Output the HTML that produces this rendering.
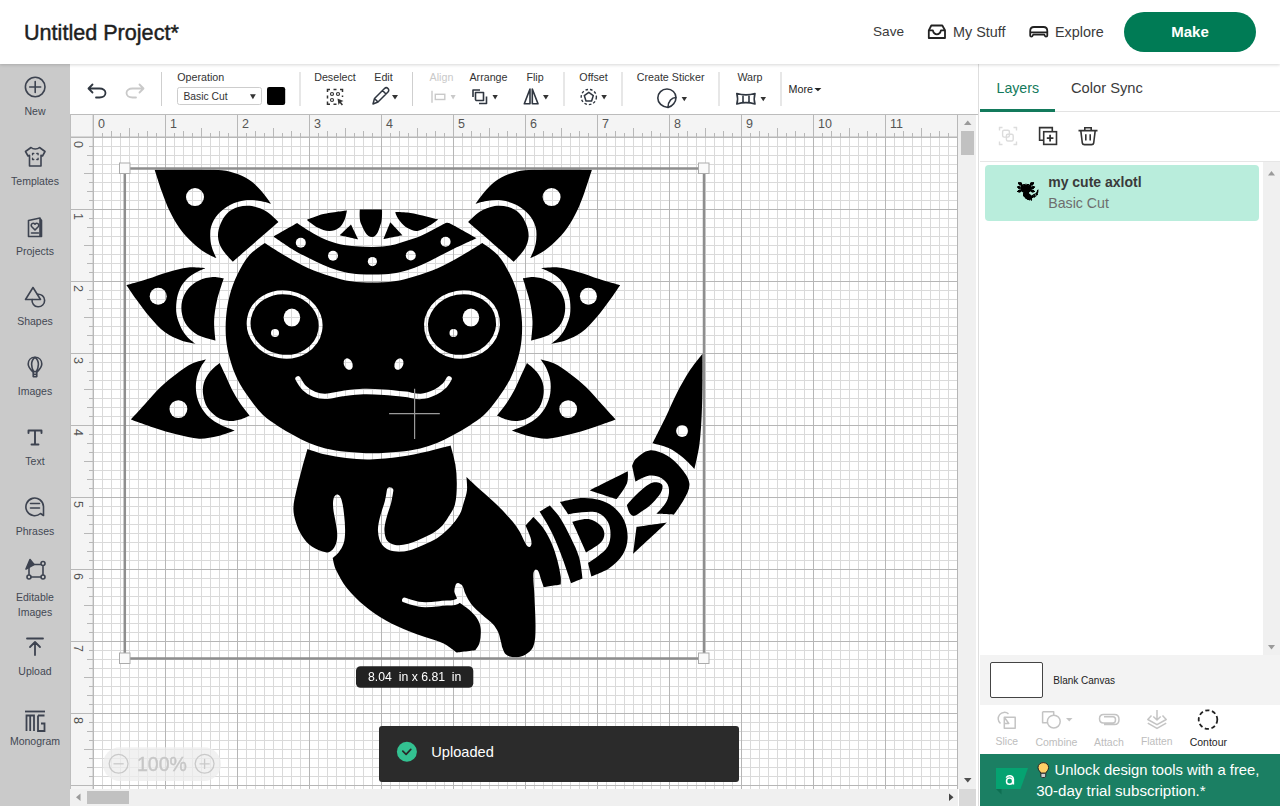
<!DOCTYPE html>
<html><head><meta charset="utf-8">
<style>
*{margin:0;padding:0;box-sizing:border-box}
html,body{width:1280px;height:806px;overflow:hidden;background:#fff;font-family:"Liberation Sans",sans-serif;color:#333}
.abs{position:absolute}
.t{position:absolute;white-space:nowrap;line-height:1}
#hdr{left:0;top:0;width:1280px;height:64px;background:#fff;z-index:5;box-shadow:0 1px 3px rgba(0,0,0,.16)}
#side{left:0;top:64px;width:70px;height:742px;background:#cacaca}
.sl{position:absolute;left:0;width:70px;text-align:center;font-size:10.5px;color:#434853;line-height:1;white-space:nowrap}
.tl{position:absolute;font-size:10.7px;color:#333;line-height:1;white-space:nowrap;transform:translateX(-50%)}
</style></head><body>
<svg class="abs" style="left:70px;top:114px" width="908" height="692" viewBox="70 114 908 692"><rect x="70" y="114" width="908" height="692" fill="#fff"/><path d="M102.5,137V789M111.5,137V789M120.5,137V789M129.5,137V789M138.5,137V789M147.5,137V789M156.5,137V789M174.5,137V789M183.5,137V789M192.5,137V789M201.5,137V789M210.5,137V789M219.5,137V789M228.5,137V789M246.5,137V789M255.5,137V789M264.5,137V789M273.5,137V789M282.5,137V789M291.5,137V789M300.5,137V789M318.5,137V789M327.5,137V789M336.5,137V789M345.5,137V789M354.5,137V789M363.5,137V789M372.5,137V789M390.5,137V789M399.5,137V789M408.5,137V789M417.5,137V789M426.5,137V789M435.5,137V789M444.5,137V789M462.5,137V789M471.5,137V789M480.5,137V789M489.5,137V789M498.5,137V789M507.5,137V789M516.5,137V789M534.5,137V789M543.5,137V789M552.5,137V789M561.5,137V789M570.5,137V789M579.5,137V789M588.5,137V789M606.5,137V789M615.5,137V789M624.5,137V789M633.5,137V789M642.5,137V789M651.5,137V789M660.5,137V789M678.5,137V789M687.5,137V789M696.5,137V789M705.5,137V789M714.5,137V789M723.5,137V789M732.5,137V789M750.5,137V789M759.5,137V789M768.5,137V789M777.5,137V789M786.5,137V789M795.5,137V789M804.5,137V789M822.5,137V789M831.5,137V789M840.5,137V789M849.5,137V789M858.5,137V789M867.5,137V789M876.5,137V789M894.5,137V789M903.5,137V789M912.5,137V789M921.5,137V789M930.5,137V789M939.5,137V789M948.5,137V789M93,146.5H958M93,155.5H958M93,164.5H958M93,173.5H958M93,182.5H958M93,191.5H958M93,200.5H958M93,218.5H958M93,227.5H958M93,236.5H958M93,245.5H958M93,254.5H958M93,263.5H958M93,272.5H958M93,290.5H958M93,299.5H958M93,308.5H958M93,317.5H958M93,326.5H958M93,335.5H958M93,344.5H958M93,362.5H958M93,371.5H958M93,380.5H958M93,389.5H958M93,398.5H958M93,407.5H958M93,416.5H958M93,434.5H958M93,443.5H958M93,452.5H958M93,461.5H958M93,470.5H958M93,479.5H958M93,488.5H958M93,506.5H958M93,515.5H958M93,524.5H958M93,533.5H958M93,542.5H958M93,551.5H958M93,560.5H958M93,578.5H958M93,587.5H958M93,596.5H958M93,605.5H958M93,614.5H958M93,623.5H958M93,632.5H958M93,650.5H958M93,659.5H958M93,668.5H958M93,677.5H958M93,686.5H958M93,695.5H958M93,704.5H958M93,722.5H958M93,731.5H958M93,740.5H958M93,749.5H958M93,758.5H958M93,767.5H958M93,776.5H958" stroke="#dadada" stroke-width="1"/><path d="M93.5,137V789M165.5,137V789M237.5,137V789M309.5,137V789M381.5,137V789M453.5,137V789M525.5,137V789M597.5,137V789M669.5,137V789M741.5,137V789M813.5,137V789M885.5,137V789M957.5,137V789M93,137.5H958M93,209.5H958M93,281.5H958M93,353.5H958M93,425.5H958M93,497.5H958M93,569.5H958M93,641.5H958M93,713.5H958M93,785.5H958" stroke="#b6b6b6" stroke-width="1"/><rect x="70" y="114" width="888" height="23" fill="#f4f4f4"/><rect x="70" y="137" width="23" height="652" fill="#f4f4f4"/><path d="M93.5,114V137M102.5,133V137M111.5,131V137M120.5,133V137M129.5,128V137M138.5,133V137M147.5,131V137M156.5,133V137M165.5,114V137M174.5,133V137M183.5,131V137M192.5,133V137M201.5,128V137M210.5,133V137M219.5,131V137M228.5,133V137M237.5,114V137M246.5,133V137M255.5,131V137M264.5,133V137M273.5,128V137M282.5,133V137M291.5,131V137M300.5,133V137M309.5,114V137M318.5,133V137M327.5,131V137M336.5,133V137M345.5,128V137M354.5,133V137M363.5,131V137M372.5,133V137M381.5,114V137M390.5,133V137M399.5,131V137M408.5,133V137M417.5,128V137M426.5,133V137M435.5,131V137M444.5,133V137M453.5,114V137M462.5,133V137M471.5,131V137M480.5,133V137M489.5,128V137M498.5,133V137M507.5,131V137M516.5,133V137M525.5,114V137M534.5,133V137M543.5,131V137M552.5,133V137M561.5,128V137M570.5,133V137M579.5,131V137M588.5,133V137M597.5,114V137M606.5,133V137M615.5,131V137M624.5,133V137M633.5,128V137M642.5,133V137M651.5,131V137M660.5,133V137M669.5,114V137M678.5,133V137M687.5,131V137M696.5,133V137M705.5,128V137M714.5,133V137M723.5,131V137M732.5,133V137M741.5,114V137M750.5,133V137M759.5,131V137M768.5,133V137M777.5,128V137M786.5,133V137M795.5,131V137M804.5,133V137M813.5,114V137M822.5,133V137M831.5,131V137M840.5,133V137M849.5,128V137M858.5,133V137M867.5,131V137M876.5,133V137M885.5,114V137M894.5,133V137M903.5,131V137M912.5,133V137M921.5,128V137M930.5,133V137M939.5,131V137M948.5,133V137M957.5,114V137M70,137.5H93M89,146.5H93M87,155.5H93M89,164.5H93M84,173.5H93M89,182.5H93M87,191.5H93M89,200.5H93M70,209.5H93M89,218.5H93M87,227.5H93M89,236.5H93M84,245.5H93M89,254.5H93M87,263.5H93M89,272.5H93M70,281.5H93M89,290.5H93M87,299.5H93M89,308.5H93M84,317.5H93M89,326.5H93M87,335.5H93M89,344.5H93M70,353.5H93M89,362.5H93M87,371.5H93M89,380.5H93M84,389.5H93M89,398.5H93M87,407.5H93M89,416.5H93M70,425.5H93M89,434.5H93M87,443.5H93M89,452.5H93M84,461.5H93M89,470.5H93M87,479.5H93M89,488.5H93M70,497.5H93M89,506.5H93M87,515.5H93M89,524.5H93M84,533.5H93M89,542.5H93M87,551.5H93M89,560.5H93M70,569.5H93M89,578.5H93M87,587.5H93M89,596.5H93M84,605.5H93M89,614.5H93M87,623.5H93M89,632.5H93M70,641.5H93M89,650.5H93M87,659.5H93M89,668.5H93M84,677.5H93M89,686.5H93M87,695.5H93M89,704.5H93M70,713.5H93M89,722.5H93M87,731.5H93M89,740.5H93M84,749.5H93M89,758.5H93M87,767.5H93M89,776.5H93M70,785.5H93" stroke="#b8b8b8" stroke-width="1"/><rect x="70" y="136.5" width="888" height="1.2" fill="#b8b8b8"/><rect x="92.6" y="114" width="1.2" height="675" fill="#b8b8b8"/><rect x="70" y="113" width="908" height="2" fill="#bcbcbc"/><rect x="70" y="114" width="1" height="692" fill="#bdbdbd"/><g font-family="Liberation Sans"><text x="98" y="128" font-size="12.5" fill="#555">0</text><text x="170" y="128" font-size="12.5" fill="#555">1</text><text x="242" y="128" font-size="12.5" fill="#555">2</text><text x="314" y="128" font-size="12.5" fill="#555">3</text><text x="386" y="128" font-size="12.5" fill="#555">4</text><text x="458" y="128" font-size="12.5" fill="#555">5</text><text x="530" y="128" font-size="12.5" fill="#555">6</text><text x="602" y="128" font-size="12.5" fill="#555">7</text><text x="674" y="128" font-size="12.5" fill="#555">8</text><text x="746" y="128" font-size="12.5" fill="#555">9</text><text x="818" y="128" font-size="12.5" fill="#555">10</text><text x="890" y="128" font-size="12.5" fill="#555">11</text><text transform="translate(74,141) rotate(90)" x="0" y="0" font-size="12.5" fill="#555" >0</text><text transform="translate(74,213) rotate(90)" x="0" y="0" font-size="12.5" fill="#555" >1</text><text transform="translate(74,285) rotate(90)" x="0" y="0" font-size="12.5" fill="#555" >2</text><text transform="translate(74,357) rotate(90)" x="0" y="0" font-size="12.5" fill="#555" >3</text><text transform="translate(74,429) rotate(90)" x="0" y="0" font-size="12.5" fill="#555" >4</text><text transform="translate(74,501) rotate(90)" x="0" y="0" font-size="12.5" fill="#555" >5</text><text transform="translate(74,573) rotate(90)" x="0" y="0" font-size="12.5" fill="#555" >6</text><text transform="translate(74,645) rotate(90)" x="0" y="0" font-size="12.5" fill="#555" >7</text><text transform="translate(74,717) rotate(90)" x="0" y="0" font-size="12.5" fill="#555" >8</text></g><rect x="958" y="115" width="18" height="674" fill="#f0f0f0"/><path d="M964,125H971.5L967.75,120.5Z" fill="#9a9a9a"/><rect x="961" y="131" width="13" height="24" fill="#c1c1c1"/><path d="M964,778H971.5L967.75,782.5Z" fill="#505050"/><rect x="70" y="789" width="888" height="17" fill="#f0f0f0"/><path d="M80.5,793.5V801L76,797.25Z" fill="#9a9a9a"/><rect x="87" y="791" width="42" height="13" fill="#c1c1c1"/><path d="M949,793.5V801L953.5,797.25Z" fill="#454545"/><rect x="959" y="789" width="17" height="17" fill="#d9d9d9"/></svg>
<svg class="abs" style="left:0;top:0" width="1280" height="806" viewBox="0 0 1280 806"><defs><mask id="axm" maskUnits="userSpaceOnUse" x="0" y="0" width="1280" height="806"><rect x="0" y="0" width="1280" height="806" fill="#000"/><g fill="#fff"><path d="M154.7,169.8 C154.7,169.8 199.5,169.0 221.9,170.2 C227.5,170.5 233.0,172.3 238.2,174.3 C243.1,176.2 247.7,178.7 251.9,181.8 C256.0,184.9 259.4,188.8 262.8,192.7 C265.8,196.1 271.0,203.7 271.0,203.7 C271.0,203.7 263.8,201.4 260.1,200.9 C255.1,200.2 250.1,199.6 245.1,200.3 C239.9,201.0 234.7,202.6 230.0,205.0 C225.4,207.4 221.2,210.7 217.8,214.6 C214.7,218.1 212.4,222.4 211.0,226.9 C209.8,230.8 210.1,235.0 210.3,239.1 C210.5,242.4 211.3,245.6 212.3,248.7 C213.3,252.0 216.4,258.2 216.4,258.2 C216.4,258.2 208.9,255.0 205.5,252.8 C200.6,249.6 196.0,245.9 191.8,241.9 C187.4,237.7 183.2,233.2 179.6,228.2 C175.9,223.1 172.8,217.5 170.0,211.8 C166.8,205.2 164.3,198.3 161.8,191.4 C159.2,184.3 154.7,169.8 154.7,169.8Z"/><path d="M591.9,169.8 C591.9,169.8 547.1,169.0 524.7,170.2 C519.1,170.5 513.6,172.3 508.4,174.3 C503.5,176.2 498.9,178.7 494.7,181.8 C490.6,184.9 487.2,188.8 483.8,192.7 C480.8,196.1 475.6,203.7 475.6,203.7 C475.6,203.7 482.8,201.4 486.5,200.9 C491.5,200.2 496.5,199.6 501.5,200.3 C506.7,201.0 511.9,202.6 516.6,205.0 C521.2,207.4 525.4,210.7 528.8,214.6 C531.9,218.1 534.2,222.4 535.6,226.9 C536.8,230.8 536.5,235.0 536.3,239.1 C536.1,242.4 535.3,245.6 534.3,248.7 C533.3,252.0 530.2,258.2 530.2,258.2 C530.2,258.2 537.7,255.0 541.1,252.8 C546.0,249.6 550.6,245.9 554.8,241.9 C559.2,237.7 563.4,233.2 567.0,228.2 C570.7,223.1 573.8,217.5 576.6,211.8 C579.8,205.2 582.3,198.3 584.8,191.4 C587.4,184.3 591.9,169.8 591.9,169.8Z"/><path d="M278.5,222.1 C278.5,222.1 271.3,214.5 266.9,211.8 C262.3,209.0 257.2,207.0 251.9,206.1 C247.4,205.4 242.6,205.8 238.2,207.1 C234.2,208.3 230.3,210.3 227.3,213.2 C224.2,216.2 222.1,220.1 220.5,224.1 C218.9,228.0 217.8,232.2 218.0,236.4 C218.2,240.7 219.7,245.0 221.9,248.7 C224.8,253.6 232.8,261.7 232.8,261.7 C232.8,261.7 278.5,222.1 278.5,222.1Z"/><path d="M468.1,222.1 C468.1,222.1 475.3,214.5 479.7,211.8 C484.3,209.0 489.4,207.0 494.7,206.1 C499.2,205.4 504.0,205.8 508.4,207.1 C512.4,208.3 516.3,210.3 519.3,213.2 C522.4,216.2 524.5,220.1 526.1,224.1 C527.7,228.0 528.8,232.2 528.6,236.4 C528.4,240.7 526.9,245.0 524.7,248.7 C521.8,253.6 513.8,261.7 513.8,261.7 C513.8,261.7 468.1,222.1 468.1,222.1Z"/><path d="M126.5,285.2 C126.5,285.2 140.4,281.3 147.3,279.1 C154.2,277.0 160.9,274.3 167.8,272.3 C174.5,270.4 181.3,268.3 188.2,267.5 C193.9,266.9 205.3,268.2 205.3,268.2 C205.3,268.2 199.2,270.6 196.4,272.3 C193.0,274.3 189.7,276.3 186.9,279.1 C184.1,281.9 181.7,285.1 180.0,288.7 C178.2,292.5 177.1,296.7 176.6,300.9 C176.0,305.4 175.9,310.1 176.6,314.6 C177.3,318.9 178.9,323.0 180.7,326.9 C182.3,330.3 184.4,333.6 186.9,336.4 C189.4,339.3 195.7,343.9 195.7,343.9 C195.7,343.9 186.0,342.2 181.4,340.5 C175.7,338.3 169.9,335.9 165.0,332.3 C159.3,328.1 154.7,322.6 150.0,317.3 C145.1,311.7 140.8,305.6 136.4,299.6 C133.0,294.9 126.5,285.2 126.5,285.2Z"/><path d="M620.1,285.2 C620.1,285.2 606.2,281.3 599.3,279.1 C592.4,277.0 585.7,274.3 578.8,272.3 C572.1,270.4 565.3,268.3 558.4,267.5 C552.7,266.9 541.3,268.2 541.3,268.2 C541.3,268.2 547.4,270.6 550.2,272.3 C553.6,274.3 556.9,276.3 559.7,279.1 C562.5,281.9 564.9,285.1 566.6,288.7 C568.4,292.5 569.5,296.7 570.0,300.9 C570.6,305.4 570.7,310.1 570.0,314.6 C569.3,318.9 567.7,323.0 565.9,326.9 C564.3,330.3 562.2,333.6 559.7,336.4 C557.2,339.3 550.9,343.9 550.9,343.9 C550.9,343.9 560.6,342.2 565.2,340.5 C570.9,338.3 576.7,335.9 581.6,332.3 C587.3,328.1 591.9,322.6 596.6,317.3 C601.5,311.7 605.8,305.6 610.2,299.6 C613.6,294.9 620.1,285.2 620.1,285.2Z"/><path d="M223.7,278.4 C223.7,278.4 216.4,276.8 212.8,277.1 C208.1,277.5 203.4,278.5 199.1,280.5 C195.0,282.4 191.1,285.2 188.2,288.7 C185.3,292.2 183.1,296.5 182.1,300.9 C181.1,305.3 181.2,310.1 182.1,314.6 C182.9,318.5 184.5,322.4 186.9,325.5 C189.8,329.3 193.5,332.8 197.8,335.0 C203.3,337.9 215.5,340.5 215.5,340.5 C215.5,340.5 213.9,327.8 214.1,321.4 C214.3,314.5 215.4,307.6 216.9,300.9 C218.6,293.3 223.7,278.4 223.7,278.4Z"/><path d="M522.9,278.4 C522.9,278.4 530.2,276.8 533.8,277.1 C538.5,277.5 543.2,278.5 547.5,280.5 C551.6,282.4 555.5,285.2 558.4,288.7 C561.3,292.2 563.5,296.5 564.5,300.9 C565.5,305.3 565.4,310.1 564.5,314.6 C563.7,318.5 562.1,322.4 559.7,325.5 C556.8,329.3 553.1,332.8 548.8,335.0 C543.3,337.9 531.1,340.5 531.1,340.5 C531.1,340.5 532.7,327.8 532.5,321.4 C532.3,314.5 531.2,307.6 529.7,300.9 C528.0,293.3 522.9,278.4 522.9,278.4Z"/><path d="M130.9,419.6 C130.9,419.6 140.0,409.6 144.6,404.6 C150.0,398.7 155.1,392.4 160.9,386.8 C166.0,381.9 171.6,377.4 177.3,373.2 C182.1,369.7 186.9,366.1 192.3,363.6 C196.6,361.6 206.0,359.6 206.0,359.6 C206.0,359.6 201.9,364.7 200.5,367.7 C198.7,371.6 197.1,375.7 196.4,380.0 C195.7,384.5 195.7,389.2 196.4,393.7 C197.1,397.9 198.5,402.1 200.5,405.9 C202.6,409.9 205.4,413.8 208.7,416.9 C212.3,420.2 216.7,422.7 221.0,425.0 C225.3,427.3 234.6,430.5 234.6,430.5 C234.6,430.5 223.8,434.7 218.2,436.0 C211.9,437.4 205.5,438.9 199.1,438.7 C191.7,438.4 184.5,436.3 177.3,434.6 C169.5,432.7 161.8,430.3 154.1,427.8 C146.3,425.3 130.9,419.6 130.9,419.6Z"/><path d="M615.7,419.6 C615.7,419.6 606.6,409.6 602.0,404.6 C596.6,398.7 591.5,392.4 585.7,386.8 C580.6,381.9 575.0,377.4 569.3,373.2 C564.5,369.7 559.7,366.1 554.3,363.6 C550.0,361.6 540.6,359.6 540.6,359.6 C540.6,359.6 544.7,364.7 546.1,367.7 C547.9,371.6 549.5,375.7 550.2,380.0 C550.9,384.5 550.9,389.2 550.2,393.7 C549.5,397.9 548.1,402.1 546.1,405.9 C544.0,409.9 541.2,413.8 537.9,416.9 C534.3,420.2 529.9,422.7 525.6,425.0 C521.3,427.3 512.0,430.5 512.0,430.5 C512.0,430.5 522.8,434.7 528.4,436.0 C534.7,437.4 541.1,438.9 547.5,438.7 C554.9,438.4 562.1,436.3 569.3,434.6 C577.1,432.7 584.8,430.3 592.5,427.8 C600.3,425.3 615.7,419.6 615.7,419.6Z"/><path d="M219.6,363.0 C219.6,363.0 212.7,368.4 210.0,371.8 C207.4,375.1 205.1,378.7 203.9,382.7 C202.7,386.6 202.6,390.9 203.2,395.0 C203.8,399.3 205.0,403.6 207.3,407.3 C209.7,411.1 213.1,414.5 216.9,416.9 C220.6,419.2 224.9,420.5 229.2,421.0 C232.8,421.4 236.6,420.6 240.1,419.6 C243.4,418.7 249.6,415.5 249.6,415.5 C249.6,415.5 243.0,407.5 240.1,403.2 C237.1,398.8 234.4,394.3 231.9,389.6 C229.4,384.7 227.4,379.6 225.1,374.6 C223.3,370.7 219.6,363.0 219.6,363.0Z"/><path d="M527.0,363.0 C527.0,363.0 533.9,368.4 536.6,371.8 C539.2,375.1 541.5,378.7 542.7,382.7 C543.9,386.6 544.0,390.9 543.4,395.0 C542.8,399.3 541.6,403.6 539.3,407.3 C536.9,411.1 533.5,414.5 529.7,416.9 C526.0,419.2 521.7,420.5 517.4,421.0 C513.8,421.4 510.0,420.6 506.5,419.6 C503.2,418.7 497.0,415.5 497.0,415.5 C497.0,415.5 503.6,407.5 506.5,403.2 C509.5,398.8 512.2,394.3 514.7,389.6 C517.2,384.7 519.2,379.6 521.5,374.6 C523.3,370.7 527.0,363.0 527.0,363.0Z"/><path d="M372.4,282.5 C365.3,282.5 358.1,282.4 351.0,281.3 C344.0,280.3 337.2,278.3 330.5,276.2 C323.0,273.9 315.5,271.4 308.4,268.2 C300.7,264.7 293.3,260.5 286.0,256.2 C278.8,252.1 264.8,242.9 264.8,242.9 C264.8,242.9 253.9,250.0 249.7,254.8 C244.6,260.7 240.8,267.7 237.3,274.7 C234.2,281.0 231.7,287.7 229.9,294.5 C228.0,301.8 226.7,309.3 226.1,316.8 C225.5,324.2 225.4,331.8 226.1,339.2 C226.7,345.9 228.1,352.5 229.9,359.0 C231.8,365.8 234.1,372.6 237.3,378.9 C240.8,385.9 245.2,392.4 249.7,398.7 C253.8,404.4 258.0,410.1 263.0,415.0 C267.4,419.3 272.7,422.5 277.8,425.9 C283.1,429.4 288.6,432.5 294.1,435.5 C299.0,438.2 303.9,440.9 309.1,443.0 C314.4,445.2 319.9,447.1 325.5,448.4 C332.2,450.0 339.1,451.1 346.0,451.8 C354.8,452.7 363.6,453.3 372.4,453.3 C381.4,453.3 390.4,452.7 399.3,451.8 C406.4,451.1 413.4,450.0 420.2,448.4 C425.9,447.1 431.5,445.2 437.0,443.0 C442.2,440.9 447.3,438.2 452.3,435.5 C457.9,432.5 463.5,429.4 468.9,425.9 C474.1,422.5 479.5,419.3 484.0,415.0 C489.1,410.1 493.4,404.4 497.6,398.7 C502.2,392.4 506.7,385.9 510.2,378.9 C513.4,372.6 515.8,365.8 517.8,359.0 C519.6,352.5 521.0,345.9 521.6,339.2 C522.3,331.8 522.3,324.2 521.6,316.8 C521.0,309.3 519.7,301.8 517.8,294.5 C515.9,287.7 513.4,281.0 510.2,274.7 C506.6,267.7 502.8,260.7 497.6,254.8 C493.3,249.9 482.2,242.9 482.2,242.9 C482.2,242.9 467.9,252.1 460.5,256.2 C453.1,260.5 445.5,264.7 437.7,268.2 C430.4,271.4 422.8,273.9 415.1,276.2 C408.3,278.3 401.3,280.3 394.2,281.3 C387.0,282.4 379.7,282.5 372.4,282.5Z"/><path d="M372.4,247.0 C366.9,246.9 361.5,246.8 356.0,246.3 C350.6,245.8 345.2,245.4 340.0,244.2 C334.8,243.0 329.6,241.4 324.7,239.3 C319.5,237.1 314.6,234.2 309.8,231.3 C305.4,228.7 297.1,222.9 297.1,222.9 C297.1,222.9 273.4,236.5 273.4,236.5 C273.4,236.5 286.6,245.8 293.5,249.9 C300.7,254.2 308.3,257.8 315.8,261.5 C320.4,263.8 325.1,266.0 330.0,267.8 C334.9,269.6 339.8,271.1 344.9,272.2 C349.8,273.3 354.8,273.8 359.8,274.2 C364.0,274.6 368.2,274.6 372.4,274.6 C376.6,274.6 380.7,274.6 384.9,274.2 C389.9,273.8 394.9,273.3 399.8,272.2 C404.9,271.1 409.8,269.6 414.7,267.8 C419.6,266.0 424.2,263.8 428.9,261.5 C436.5,257.8 443.7,253.6 451.3,249.9 C459.6,245.8 476.5,238.2 476.5,238.2 C476.5,238.2 460.3,228.9 452.0,224.5 C450.4,223.7 448.8,222.6 447.0,222.7 C445.1,222.8 443.6,224.2 441.9,225.0 C438.7,226.6 435.7,228.4 432.5,230.0 C428.4,232.1 424.3,234.4 420.0,236.2 C415.9,238.0 411.7,239.2 407.5,240.6 C403.4,241.9 399.2,243.4 395.0,244.4 C390.9,245.4 386.7,246.1 382.5,246.6 C379.2,247.0 375.8,247.0 372.4,247.0Z"/><path d="M307.0,219.9 C307.0,219.9 317.8,215.4 323.4,214.1 C331.1,212.3 346.9,210.5 346.9,210.5 C346.9,210.5 345.9,217.0 344.5,219.9 C343.1,222.9 341.4,226.1 338.7,228.1 C336.1,230.1 332.6,231.2 329.3,231.1 C325.2,231.0 321.2,229.3 317.6,227.5 C313.7,225.5 307.0,219.9 307.0,219.9Z"/><path d="M351.0,224.6 C351.0,224.6 339.8,235.2 339.8,235.2 C339.8,235.2 358.0,239.3 358.0,239.3 C358.0,239.3 351.0,224.6 351.0,224.6Z"/><path d="M359.8,209.4 C359.8,209.4 382.0,209.4 382.0,209.4 C382.0,209.4 382.5,219.0 380.9,223.4 C379.1,228.5 377.5,236.9 372.1,236.9 C366.3,236.9 363.3,228.7 360.9,223.4 C359.0,219.1 359.8,209.4 359.8,209.4Z"/><path d="M390.3,222.2 C390.3,222.2 383.4,239.1 383.4,239.1 C383.4,239.1 402.5,235.3 402.5,235.3 C402.5,235.3 390.3,222.2 390.3,222.2Z"/><path d="M395.3,211.9 C395.3,211.9 403.5,212.0 407.5,212.5 C411.7,213.0 415.9,214.1 420.0,215.0 C426.1,216.4 438.1,219.4 438.1,219.4 C438.1,219.4 432.5,223.9 429.4,225.6 C425.6,227.7 421.8,230.4 417.5,230.9 C414.1,231.3 410.5,229.8 407.5,228.1 C404.5,226.5 402.2,223.8 400.0,221.2 C398.4,219.4 397.3,217.2 396.2,215.0 C395.8,214.0 395.3,211.9 395.3,211.9Z"/><path d="M307.5,448.9 C307.5,448.9 319.4,453.2 325.5,454.6 C332.2,456.2 339.1,457.3 346.0,458.0 C354.0,458.9 362.0,459.6 370.0,459.4 C380.0,459.2 390.1,458.2 400.0,456.8 C409.2,455.5 418.3,453.4 427.3,451.4 C435.1,449.6 450.6,445.4 450.6,445.4 C450.6,445.4 454.3,457.8 455.3,464.1 C456.4,470.9 456.9,477.7 456.8,484.6 C456.7,491.4 456.6,498.4 454.8,505.0 C453.4,510.0 449.9,514.2 447.3,518.7 C445.8,521.3 443.2,523.5 442.5,526.5 C442.2,528.0 444.5,530.5 444.5,530.5 C444.5,530.5 448.5,528.5 450.0,526.9 C453.6,523.1 457.1,519.1 459.6,514.6 C461.8,510.7 462.7,506.1 464.0,501.8 C465.2,497.9 466.6,494.0 467.0,489.9 C467.4,485.6 466.4,477.0 466.4,477.0 C466.4,477.0 472.0,482.3 474.9,484.9 C478.2,487.9 481.5,490.8 484.8,493.8 C488.1,496.8 491.5,499.7 494.7,502.8 C498.1,506.0 501.5,509.3 504.7,512.7 C507.4,515.6 510.1,518.5 512.6,521.6 C515.1,524.8 517.5,528.0 519.6,531.5 C521.5,534.7 522.7,538.2 524.5,541.5 C525.4,543.1 526.2,544.9 527.5,546.2 C528.1,546.8 529.3,547.3 530.0,546.8 C531.0,546.1 531.4,544.7 531.5,543.5 C531.6,541.5 531.1,539.4 530.5,537.5 C529.1,533.4 525.5,525.6 525.5,525.6 C525.5,525.6 533.4,517.1 533.4,517.1 C533.4,517.1 540.8,524.4 543.7,528.7 C546.9,533.4 549.5,538.5 551.8,543.7 C554.1,549.0 555.8,554.5 557.3,560.0 C558.8,565.4 559.9,570.9 560.7,576.4 C561.1,579.1 560.7,584.6 560.7,584.6 C560.7,584.6 543.7,587.3 543.7,587.3 C543.7,587.3 541.8,581.8 540.9,579.1 C540.0,576.4 539.6,573.5 538.2,571.0 C537.7,570.1 536.4,569.1 535.5,569.6 C534.2,570.4 533.5,572.2 533.4,573.7 C533.1,580.3 534.0,587.0 534.3,593.6 C534.7,605.4 535.7,617.2 535.5,629.0 C535.4,634.9 535.5,641.2 533.2,646.7 C531.7,650.3 528.3,653.0 524.9,654.9 C521.7,656.7 517.9,657.4 514.3,657.3 C511.4,657.2 508.3,656.3 506.0,654.5 C504.1,653.0 503.4,650.3 502.5,648.0 C501.7,646.1 501.6,643.9 501.0,641.9 C500.1,638.7 499.6,635.3 498.2,632.3 C496.8,629.3 495.0,626.5 492.8,624.1 C489.5,620.6 485.4,617.9 481.9,614.6 C478.1,611.1 474.2,607.7 471.0,603.7 C468.7,600.8 467.1,597.4 465.5,594.1 C464.1,591.2 463.9,587.8 462.1,585.2 C461.2,584.0 458.0,583.5 458.0,583.5 C458.0,583.5 457.5,601.5 457.5,601.5 C457.5,601.5 465.8,606.8 469.5,610.1 C472.6,612.9 475.6,615.9 477.7,619.5 C479.4,622.4 480.4,625.7 480.7,629.0 C481.1,633.7 480.6,638.5 479.5,643.1 C478.8,645.8 475.4,650.2 475.4,650.2 C475.4,650.2 456.5,652.5 456.5,652.5 C456.5,652.5 450.4,647.6 447.1,645.5 C444.9,644.1 442.5,642.8 440.0,641.9 C434.8,639.9 429.4,638.6 424.2,636.8 C419.3,635.1 414.4,633.6 409.7,631.6 C401.5,628.1 393.2,624.7 385.5,620.3 C378.1,616.1 371.0,611.3 364.5,605.8 C358.1,600.4 352.0,594.6 346.8,588.0 C342.4,582.4 338.9,576.0 335.8,569.5 C334.1,565.9 332.7,558.0 332.7,558.0 C332.7,558.0 337.0,554.6 338.6,552.5 C340.7,549.8 342.6,546.8 343.6,543.6 C344.8,539.8 345.0,535.7 345.1,531.7 C345.2,526.1 344.7,520.4 344.1,514.8 C343.5,509.8 343.1,504.7 341.6,499.9 C340.9,497.8 339.8,495.0 337.6,494.5 C335.9,494.1 334.2,496.3 333.7,497.9 C332.7,501.1 333.0,504.6 333.2,507.9 C333.5,511.9 334.5,515.8 335.2,519.8 C335.8,523.8 336.8,527.7 337.1,531.7 C337.3,535.0 337.4,538.4 336.6,541.6 C335.9,544.5 334.7,547.4 332.7,549.6 C331.2,551.2 328.9,552.8 326.7,552.5 C321.4,551.7 316.2,549.6 311.8,546.6 C307.7,543.8 304.6,539.8 301.9,535.7 C299.3,531.8 297.4,527.3 296.0,522.8 C294.5,518.1 293.3,513.1 293.4,508.2 C293.5,502.2 295.1,496.4 296.4,490.5 C297.9,483.6 299.8,476.8 301.6,470.0 C303.5,462.9 307.5,448.9 307.5,448.9Z"/><path d="M539.6,511.6 C539.6,511.6 549.8,505.5 549.8,505.5 C549.8,505.5 557.1,513.3 560.0,517.7 C564.2,524.2 567.6,531.2 571.0,538.2 C574.0,544.4 577.2,550.6 579.1,557.3 C581.1,564.2 582.5,578.5 582.5,578.5 C582.5,578.5 571.0,583.2 571.0,583.2 C571.0,583.2 568.3,575.0 566.9,571.0 C564.7,564.6 562.5,558.1 560.0,551.8 C557.1,544.4 554.1,537.1 550.5,530.0 C547.3,523.6 539.6,511.6 539.6,511.6Z"/><path d="M560.0,502.0 C560.0,502.0 568.2,514.3 568.2,514.3 C568.2,514.3 577.3,512.5 581.9,512.3 C587.3,512.1 593.1,511.1 598.2,513.0 C602.3,514.5 605.6,518.0 607.8,521.8 C609.9,525.4 610.5,529.9 610.5,534.1 C610.5,538.3 609.9,542.7 607.8,546.4 C605.6,550.3 601.7,553.0 598.2,555.9 C595.0,558.5 588.0,562.8 588.0,562.8 C588.0,562.8 591.4,576.4 591.4,576.4 C591.4,576.4 603.8,571.9 609.2,568.2 C614.5,564.5 619.4,560.1 622.8,554.6 C625.8,549.7 627.4,543.9 627.6,538.2 C627.8,532.2 626.7,526.0 624.2,520.5 C621.8,515.2 617.7,510.5 613.2,506.8 C609.3,503.6 604.5,501.4 599.6,500.0 C593.9,498.4 587.8,497.7 581.9,498.0 C574.5,498.4 560.0,502.0 560.0,502.0Z"/><path d="M572.3,521.8 C572.3,521.8 583.2,518.3 588.7,519.1 C593.3,519.8 597.6,522.7 601.0,525.9 C603.1,527.9 604.4,531.1 604.4,534.1 C604.4,537.1 603.1,540.2 601.0,542.3 C596.7,546.6 586.0,552.5 586.0,552.5 C586.0,552.5 581.4,542.0 579.1,536.8 C576.9,531.8 572.3,521.8 572.3,521.8Z"/><path d="M589.6,490.4 C589.6,490.4 627.8,471.3 627.8,471.3 C627.8,471.3 628.4,479.7 626.9,483.4 C624.5,489.2 616.5,499.1 616.5,499.1 C616.5,499.1 589.6,490.4 589.6,490.4Z"/><path d="M636.5,526.9 C636.5,526.9 666.9,522.5 666.9,522.5 C666.9,522.5 633.0,553.8 633.0,553.8 C633.0,553.8 636.5,526.9 636.5,526.9Z"/><path d="M632.1,466.1 C632.1,466.1 633.7,460.8 635.6,459.1 C639.7,455.4 644.1,451.0 649.5,450.4 C655.5,449.7 661.6,452.7 666.9,455.6 C672.3,458.6 676.8,463.0 680.7,467.8 C684.4,472.4 688.7,477.5 689.4,483.4 C690.0,488.9 686.7,494.2 684.2,499.1 C681.4,504.7 673.8,514.7 673.8,514.7 C673.8,514.7 656.4,513.8 656.4,513.8 C656.4,513.8 664.6,505.9 666.9,500.8 C668.8,496.5 669.7,491.4 668.6,486.9 C667.8,483.3 664.8,480.1 661.6,478.2 C658.0,476.1 653.6,475.0 649.5,475.6 C644.5,476.3 635.6,481.7 635.6,481.7 C635.6,481.7 632.1,466.1 632.1,466.1Z"/><path d="M626.9,505.1 C626.9,505.1 633.4,497.1 637.3,493.8 C642.2,489.6 646.9,484.5 653.0,482.6 C656.2,481.6 662.2,482.7 662.5,486.0 C663.0,491.6 658.3,496.5 654.7,500.8 C650.9,505.4 645.8,508.8 640.8,512.1 C638.2,513.8 634.9,517.0 632.1,515.6 C628.6,513.8 626.9,505.1 626.9,505.1Z"/><path d="M702.6,353.7 C702.6,353.7 693.6,364.7 689.7,370.6 C685.0,377.9 680.8,385.5 676.8,393.2 C672.7,401.1 669.4,409.4 665.5,417.4 C661.3,426.1 652.6,443.2 652.6,443.2 C652.6,443.2 663.6,445.7 668.7,448.1 C673.9,450.6 678.7,454.1 683.2,457.7 C687.3,461.1 694.5,469.0 694.5,469.0 C694.5,469.0 698.3,453.0 699.4,444.8 C700.8,434.1 701.3,423.3 701.8,412.6 C702.3,401.8 702.5,391.1 702.6,380.3 C702.7,371.4 702.6,353.7 702.6,353.7Z"/></g><g fill="#000"><circle cx="195.0" cy="197.1" r="9.0"/><circle cx="551.6" cy="197.1" r="9.0"/><circle cx="158.2" cy="296.2" r="8.5"/><circle cx="588.4" cy="296.2" r="8.5"/><circle cx="178.4" cy="409.1" r="8.9"/><circle cx="568.2" cy="409.1" r="8.9"/><circle cx="300.8" cy="242.8" r="5.0"/><circle cx="333.0" cy="255.8" r="5.0"/><circle cx="372.4" cy="261.6" r="4.6"/><circle cx="445.6" cy="241.8" r="5.0"/><circle cx="410.8" cy="255.5" r="5.0"/><circle cx="682.1" cy="431.1" r="6"/><ellipse cx="284.6" cy="324.5" rx="36.1" ry="32.1" transform="rotate(10 284.6 324.5)" fill="none" stroke="#000" stroke-width="3.9"/><ellipse cx="462.0" cy="324.5" rx="36.1" ry="32.1" transform="rotate(-10 462.0 324.5)" fill="none" stroke="#000" stroke-width="3.9"/><ellipse cx="291.9" cy="317.6" rx="8.3" ry="9"/><circle cx="275" cy="333" r="4"/><ellipse cx="470.9" cy="317.6" rx="8.3" ry="9"/><circle cx="453.5" cy="333" r="4"/><ellipse cx="348.2" cy="364.1" rx="4.2" ry="6" transform="rotate(-25 348.2 364.1)"/><ellipse cx="398.9" cy="364.1" rx="4.2" ry="6" transform="rotate(25 398.9 364.1)"/><path d="M298.0,378.8 C298.0,378.8 301.6,385.4 304.3,388.0 C307.1,390.7 310.5,392.9 314.1,394.3 C317.7,395.7 321.6,396.5 325.4,396.4 C331.1,396.3 336.6,394.3 342.3,393.6 C349.3,392.7 356.3,391.7 363.3,391.5 C370.3,391.3 377.4,391.7 384.4,392.2 C391.5,392.7 398.5,393.5 405.5,394.3 C410.7,394.9 415.8,396.8 421.0,396.4 C425.9,396.1 430.7,394.3 435.1,392.2 C438.7,390.5 442.0,388.0 444.9,385.2 C446.7,383.4 449.1,378.8 449.1,378.8" fill="none" stroke="#000" stroke-width="5.4" stroke-linecap="round" stroke-linejoin="round"/><path d="M390.1,490.6 C390.1,490.6 388.9,498.5 387.9,502.3 C386.6,507.2 384.6,511.9 383.4,516.9 C382.3,521.3 381.0,525.8 381.2,530.3 C381.4,534.5 382.0,539.1 384.5,542.5 C386.8,545.6 390.8,547.4 394.6,548.1 C399.4,549.0 404.4,548.2 409.1,547.0 C414.9,545.5 420.3,542.7 425.8,540.3 C429.3,538.7 432.8,537.1 436.0,535.0 C439.1,533.0 441.9,530.6 444.5,528.0 C447.2,525.4 452.0,519.5 452.0,519.5" fill="none" stroke="#000" stroke-width="6.5" stroke-linecap="round" stroke-linejoin="round"/><path d="M404.5,600.0 C404.5,600.0 415.9,604.1 421.9,604.6 C428.7,605.2 435.5,604.1 442.2,603.3 C447.7,602.7 454.4,604.1 458.7,600.5 C461.2,598.4 457.0,594.2 456.8,591.0 C456.7,589.1 458.0,585.5 458.0,585.5" fill="none" stroke="#000" stroke-width="5" stroke-linecap="round" stroke-linejoin="round"/></g></mask></defs><g id="axo"><rect x="100" y="150" width="620" height="520" fill="#000" mask="url(#axm)"/></g></svg>
<svg class="abs" style="left:0;top:0" width="1280" height="806" viewBox="0 0 1280 806">
  <path d="M124.8,168.4H704M124.8,658.6H704M124.8,168.4V658.6M704,168.4V658.6" fill="none" stroke="#8e8e8e" stroke-width="2.5"/>
  <g fill="#fafafa" stroke="#ababab" stroke-width="1">
    <rect x="119.5" y="163" width="10.5" height="10.5"/>
    <rect x="698.5" y="163" width="10.5" height="10.5"/>
    <rect x="119.5" y="653" width="10.5" height="10.5"/>
    <rect x="698.5" y="653" width="10.5" height="10.5"/>
  </g>
  <path d="M414.6,388.7V439M389.1,413.7H439.8" stroke="#9a9a9a" stroke-width="1.2"/>
  <rect x="356" y="666.3" width="117.3" height="21.4" rx="4.5" fill="#222"/>
  <rect x="103" y="747.3" width="118" height="33.7" rx="16.8" fill="#ececec" fill-opacity="0.75"/>
  <g fill="none" stroke="#c9c9c9" stroke-width="1.3">
    <circle cx="118.6" cy="763.8" r="9.4"/><path d="M113.5,763.8H123.7"/>
    <circle cx="204.6" cy="763.8" r="9.4"/><path d="M199.5,763.8H209.7M204.6,758.7V768.9"/>
  </g>
  <rect x="379" y="726" width="360" height="56" rx="3" fill="#2b2b2b"/>
  <circle cx="406.9" cy="751.8" r="10" fill="#33c191"/>
  <path d="M402.8,751.2L406.1,754.4L410.8,749.3" fill="none" stroke="#2a2a2a" stroke-width="1.7" stroke-linecap="round" stroke-linejoin="round"/>
</svg>
<div class="t" style="left:367.9px;top:670px;font-size:13.2px;color:#fff;white-space:pre;transform:scaleX(0.93);transform-origin:0 0">8.04  in x 6.81  in</div>
<div class="t" style="left:137px;top:752.5px;font-size:21px;color:#c6c6c6;-webkit-text-stroke:0.4px #c6c6c6;transform:scaleX(0.93);transform-origin:0 0">100%</div>
<div class="t" style="left:431.3px;top:745px;font-size:14.6px;color:#fff">Uploaded</div>

<div id="hdr" class="abs">
  <div class="t" style="left:24px;top:21.5px;font-size:21.6px;color:#1e1e1e;-webkit-text-stroke:0.45px #1e1e1e">Untitled Project*</div>
  <div class="t" style="left:873px;top:25px;font-size:13.6px;color:#3a3a3a">Save</div>
  <svg class="abs" style="left:926px;top:22px" width="22" height="19" viewBox="926 22 22 19"><path d="M931.3,25.5 H942.3 L945,30.3 V38 H928.8 V30.3 Z M928.8,30.3 H932.8 C933.5,33.3 935,34.3 936.9,34.3 C938.8,34.3 940.3,33.3 941,30.3 H945" fill="none" stroke="#222" stroke-width="1.8" stroke-linejoin="round"/></svg>
  <div class="t" style="left:953px;top:25px;font-size:14.4px;color:#3a3a3a">My Stuff</div>
  <svg class="abs" style="left:1027px;top:24px" width="24" height="16" viewBox="1027 24 24 16"><path d="M1034,27 H1043.5 C1046,27 1047.3,28.5 1047.3,31 V35.5 C1047.3,36.3 1046.8,36.6 1046,36.6 C1045,36.6 1044.8,35.8 1044.3,34.6 H1033.2 C1032.7,35.8 1032.5,36.6 1031.5,36.6 C1030.7,36.6 1030.2,36.3 1030.2,35.5 V31 C1030.2,28.5 1031.5,27 1034,27 Z M1030.2,32.3 H1047.3" fill="none" stroke="#222" stroke-width="1.8" stroke-linejoin="round"/></svg>
  <div class="t" style="left:1055px;top:25px;font-size:14.4px;color:#3a3a3a">Explore</div>
  <div class="abs" style="left:1124px;top:12px;width:132px;height:40px;border-radius:20px;background:#007b55;color:#fff;font-weight:bold;font-size:15px;text-align:center;line-height:40px">Make</div>
</div>
<div id="side" class="abs">
<svg class="abs" style="left:0;top:0" width="70" height="742" viewBox="0 64 70 742">
<g fill="none" stroke="#3d4350" stroke-width="1.6" stroke-linejoin="round" stroke-linecap="round">
  <circle cx="35.2" cy="87" r="9.8"/>
  <path d="M35.2,81.5V92.5M29.7,87H40.7"/>
  <path d="M31,147.5 L25.5,151.5 L28,156 L29.5,155.3 V166 H41 V155.3 L42.5,156 L45,151.5 L39.5,147.5 C37.5,149.5 33,149.5 31,147.5Z"/>
  <path d="M32.5,153.5h1.3M36.8,153.5h1.3M32.5,159.5h1.3M36.8,159.5h1.3M32.5,153.5v1.3M38.1,153.5v1.3M32.5,158.2v1.3M38.1,158.2v1.3" stroke-width="1.3"/>
  <path d="M28.5,220.5 L40,218 V236.5 H28.5 Z M40,218.5 L41.5,220.5 V236.5 H28.5"/>
  <path d="M35,230 L31.8,226.8 C30.5,225.3 31.5,223.3 33.2,223.3 C34.2,223.3 35,224.2 35,224.2 C35,224.2 35.8,223.3 36.8,223.3 C38.5,223.3 39.5,225.3 38.2,226.8 Z"/>
  <path d="M31.5,233H38.5"/>
  <path d="M33,287.5 L25.5,299.5 H40.5 Z"/>
  <path d="M32.1,299.5 A6.3,6.3 0 1 0 37.5,294.25"/>
  <path d="M35,357.3 C30.8,357.3 28.2,360.3 28.2,364 C28.2,367 30.3,369.3 32.6,371.6 H37.4 C39.7,369.3 41.8,367 41.8,364 C41.8,360.3 39.2,357.3 35,357.3 Z M35,357.3 C32.6,359 31.6,361.8 31.6,364.3 C31.6,367 32.6,369.6 33.6,371.6 M35,357.3 C37.4,359 38.4,361.8 38.4,364.3 C38.4,367 37.4,369.6 36.4,371.6 M33.2,371.8 V376.6 H36.8 V371.8 M33.2,374.2 H36.8"/>
  <path d="M28.5,433V430.5H41.5V433M35,430.5V444.5M31.5,444.5H38.5" stroke-width="1.9"/>
  <path d="M43.5,506.5 A8.8,8.8 0 1 0 40.5,513.5 L43.5,515.5 Z M30.5,503.5H39.5M30.5,508H39.5"/>
  <path d="M29,566.5V574.5M31,577H40.5M43,566.5V574.5M33,564.5H40.5"/>
  <circle cx="29" cy="577" r="2"/><circle cx="43" cy="577" r="2"/><circle cx="43" cy="563.5" r="2"/>
  <path d="M26,569 L30,559.5 L34,564.5 Z" fill="#3d4350"/>
  <path d="M27,638.5H43M35,655V642M30,647L35,642L40,647" stroke-width="1.8"/>
</g>
<g fill="none" stroke="#3d4350" stroke-width="1.8">
  <path d="M25,711.5H45"/>
  <path d="M26.5,731V715.5H34V731M30.2,715.5V731M38,715.5H44.5M38,715.5V731H44.5V723.5H41"/>
</g>
</svg>
<div class="sl" style="top:41.7px">New</div>
<div class="sl" style="top:111.7px">Templates</div>
<div class="sl" style="top:181.7px">Projects</div>
<div class="sl" style="top:251.7px">Shapes</div>
<div class="sl" style="top:321.7px">Images</div>
<div class="sl" style="top:391.7px">Text</div>
<div class="sl" style="top:461.5px">Phrases</div>
<div class="sl" style="top:528.0px">Editable</div>
<div class="sl" style="top:542.7px">Images</div>
<div class="sl" style="top:602px">Upload</div>
<div class="sl" style="top:672px">Monogram</div>
</div>

<div class="abs" style="left:70px;top:64px;width:908px;height:49px;background:#fff"></div>
<svg class="abs" style="left:70px;top:64px" width="908" height="50" viewBox="70 64 908 50">
<g fill="none" stroke-linecap="round" stroke-linejoin="round">
  <path d="M92.5,84.5 L88.5,88.5 L92.5,92.5 M88.8,88.5 H99.5 C103,88.5 105.5,90.5 105.5,93 C105.5,95.5 103,97.5 99.5,97.5 H96" stroke="#2f3640" stroke-width="1.8"/>
  <path d="M139.5,84.5 L143.5,88.5 L139.5,92.5 M143.2,88.5 H132.5 C129,88.5 126.5,90.5 126.5,93 C126.5,95.5 129,97.5 132.5,97.5 H136" stroke="#c9c9c9" stroke-width="1.8"/>
</g>
<g fill="#cfcfcf">
  <rect x="161" y="72" width="1" height="34"/>
  <rect x="299.5" y="72" width="1" height="34"/>
  <rect x="412" y="72" width="1" height="34"/>
  <rect x="563.5" y="72" width="1" height="34"/>
  <rect x="621.5" y="72" width="1" height="34"/>
  <rect x="718.5" y="72" width="1" height="34"/>
  <rect x="780.5" y="72" width="1" height="34"/>
</g>
<rect x="177.5" y="87.5" width="84" height="17" rx="2" fill="#fff" stroke="#cdcdcd" stroke-width="1"/>
<path d="M250,94.2H255.8L252.9,99.3Z" fill="#333"/>
<rect x="267" y="87" width="18.2" height="18" rx="2.2" fill="#000"/>
<g fill="none" stroke="#333" stroke-width="1.5">
  <path d="M327.5,92V89.5H330M333.5,89.5H336.5M340,89.5H342.5V92M342.5,95.5V97M327.5,95.5V98.5M327.5,101.5V104.3H330M333.5,104.3H336.5" />
  <circle cx="332" cy="94" r="1.5" stroke-width="1.2"/><circle cx="338" cy="94" r="1.5" stroke-width="1.2"/><circle cx="332" cy="100" r="1.5" stroke-width="1.2"/>
</g>
<path d="M337.5,98.5 L343.5,101 L341,102 L343,104.5 L341.8,105.5 L339.8,103 L338.5,105 Z" fill="#333"/>
<g fill="none" stroke="#2f3640" stroke-width="1.5" stroke-linejoin="round">
  <path d="M373,104 L374.5,98.5 L384.5,88.5 C385.5,87.5 387,87.5 388,88.5 C389,89.5 389,91 388,92 L378,102 Z M374.5,98.5 L378,102 M382.5,90.5 L386,94"/>
</g>
<path d="M392,95H398L395,99.5Z" fill="#333"/>
<g fill="none" stroke="#c9c9c9" stroke-width="1.4">
  <path d="M432,90.7V102.7"/><rect x="435.3" y="94.3" width="9.5" height="5.2"/>
</g>
<path d="M450.6,95H455.6L453.1,99.5Z" fill="#c9c9c9"/>
<g fill="none" stroke="#2f3640" stroke-width="1.6" stroke-linejoin="round">
  <path d="M473,97V90H480"/>
  <path d="M475.5,99.5V92.5H483.5V100.5H476Z"/>
  <path d="M486.5,96.5V103.5H479"/>
</g>
<path d="M492.5,95.1H497.8L495.15,99.5Z" fill="#333"/>
<g fill="none" stroke="#2f3640" stroke-width="1.6" stroke-linejoin="round">
  <path d="M530,89 L524.3,103.8 H530 Z"/>
  <path d="M532.3,89 L538,103.8 H532.3 Z"/>
</g>
<path d="M543,95.1H548.7L545.85,99.5Z" fill="#333"/>
<g fill="none" stroke="#2f3640" stroke-linejoin="round">
  <circle cx="588.8" cy="97" r="7.6" stroke-width="1.4" stroke-dasharray="2.6 2"/>
  <path d="M588.8,92.3 L593.3,95.6 L591.6,100.9 H586 L584.3,95.6 Z" stroke-width="1.5"/>
</g>
<path d="M601.3,95.1H606.9L604.1,99.5Z" fill="#333"/>
<g fill="none" stroke="#2f3640" stroke-width="1.6" stroke-linejoin="round">
  <path d="M668,107.5 C662,107 657.8,103 657.8,98 C657.8,92.8 662,89 667,89 C672,89 676,92.8 676,97.5 C672,97.5 668,101 668,107.5 Z"/>
  <path d="M676,97.5 C676,102 672.5,106.5 668,107.5"/>
</g>
<path d="M681.6,97H687L684.3,101.3Z" fill="#333"/>
<g fill="none" stroke="#2f3640" stroke-width="1.6" stroke-linejoin="round">
  <path d="M736.8,93.5 C742,95 750,95 755,93.5 C754,97 754,101 755,104 C750,102.5 742,102.5 736.8,104 C737.8,101 737.8,97 736.8,93.5 Z M743,94.5V103M749,94.5V103"/>
</g>
<path d="M760.5,97H766L763.25,101.3Z" fill="#333"/>
<path d="M814.4,88H821.4L817.9,91.3Z" fill="#222"/>
</svg>
<div class="tl" style="left:200.5px;top:72.2px;transform:none;left:177.3px">Operation</div>
<div class="t" style="left:183.5px;top:92px;font-size:10.3px;color:#333">Basic Cut</div>
<div class="tl" style="left:335px;top:72.2px">Deselect</div>
<div class="tl" style="left:383.5px;top:72.2px">Edit</div>
<div class="tl" style="left:441.5px;top:72.2px;color:#c9c9c9">Align</div>
<div class="tl" style="left:488.5px;top:72.2px">Arrange</div>
<div class="tl" style="left:535px;top:72.2px">Flip</div>
<div class="tl" style="left:593.5px;top:72.2px">Offset</div>
<div class="tl" style="left:670.6px;top:72.2px">Create Sticker</div>
<div class="tl" style="left:750px;top:72.2px">Warp</div>
<div class="t" style="left:788.6px;top:83.5px;font-size:10.7px;color:#222">More</div>

<div class="abs" style="left:978px;top:64px;width:302px;height:742px;background:#fff"></div>
<div class="abs" style="left:978px;top:64px;width:1px;height:742px;background:#dedede"></div>
<div class="t" style="left:996.5px;top:81.3px;font-size:14.2px;color:#137a5c">Layers</div>
<div class="t" style="left:1071px;top:81.3px;font-size:14.7px;color:#3c3c3c">Color Sync</div>
<div class="abs" style="left:980px;top:111px;width:300px;height:1px;background:#e3e3e3"></div>
<div class="abs" style="left:980px;top:109px;width:75px;height:3px;background:#137a5c"></div>
<svg class="abs" style="left:978px;top:112px" width="302" height="50" viewBox="978 112 302 50">
<g fill="none" stroke="#dcdcdc" stroke-width="1.4">
  <path d="M999.5,130.5V127.5H1002.5M1013.5,127.5H1016.5V130.5M1016.5,141.5V144.5H1013.5M1002.5,144.5H999.5V141.5"/>
  <rect x="1002.6" y="130.3" width="6.8" height="6.8" rx="1.5"/>
  <rect x="1006.4" y="134.2" width="6.8" height="6.8" rx="1.5"/>
</g>
<g fill="none" stroke="#333" stroke-width="1.6">
  <path d="M1043.2,140.2H1039.6V127.6H1052.3V131.2"/>
  <rect x="1043.7" y="131.7" width="12.8" height="12.7"/>
  <path d="M1050.1,134.8V141.4M1046.8,138.1H1053.4" stroke-width="1.8"/>
  <path d="M1078.5,130.6H1097.5M1084.8,130.6V127.8H1091.2V130.6M1080.8,130.6 L1082.3,143 C1082.5,144.2 1083.2,144.6 1084.5,144.6 H1091.5 C1092.8,144.6 1093.5,144.2 1093.7,143 L1095.2,130.6M1085.8,134.2V140.6M1090.2,134.2V140.6"/>
</g>
</svg>
<div class="abs" style="left:980px;top:161px;width:300px;height:1px;background:#e6e6e6"></div>
<div class="abs" style="left:1263px;top:162px;width:17px;height:493px;background:#f0f0f0"></div>
<svg class="abs" style="left:1263px;top:162px" width="17" height="493" viewBox="1263 162 17 493"><path d="M1268,175.5H1275L1271.5,171Z" fill="#9a9a9a"/><path d="M1268,645H1275L1271.5,649.5Z" fill="#9a9a9a"/></svg>
<div class="abs" style="left:984.5px;top:165px;width:274.5px;height:55.5px;background:#b9eddc;border-radius:4px"></div>
<svg class="abs" style="left:1010px;top:175px" width="35" height="30" viewBox="1010 175 35 30"><defs><filter id="thk" x="0" y="0" width="1" height="1" filterUnits="objectBoundingBox"><feComponentTransfer><feFuncA type="linear" slope="1.8"/></feComponentTransfer></filter></defs><g filter="url(#thk)"><use href="#axo" transform="translate(1012.2,176.1) scale(0.0371)"/></g></svg>
<div class="t" style="left:1048.2px;top:175px;font-size:14px;font-weight:bold;color:#3a3a3a">my cute axlotl</div>
<div class="t" style="left:1048.2px;top:195.5px;font-size:14.2px;color:#6e6e6e">Basic Cut</div>
<div class="abs" style="left:980px;top:655px;width:300px;height:50px;background:#f3f3f3"></div>
<div class="abs" style="left:990.3px;top:662px;width:52.5px;height:35.7px;background:#fff;border:1px solid #444;border-radius:2px"></div>
<div class="t" style="left:1053.3px;top:676px;font-size:10px;color:#222">Blank Canvas</div>
<svg class="abs" style="left:980px;top:705px" width="300" height="49" viewBox="980 705 300 49">
<g fill="none" stroke="#c4c4c4" stroke-width="1.5" stroke-linejoin="round">
  <path d="M1008.5,713.8 A5.8,5.8 0 1 0 1000.5,723.5"/>
  <path d="M1004.3,717.3H1015.2V728.3H1004.3Z M1004.3,717.3 L1008.8,723.5 H1004.3"/>
  <path d="M1042.6,711.7H1053.7V715M1042.6,711.7V722.7H1047.5"/>
  <circle cx="1053.8" cy="721.6" r="6.4"/>
  <path d="M1104,724.5 H1114.5 C1117.2,724.5 1119,722.5 1119,719.5 C1119,716.5 1117.2,714.5 1114.5,714.5 H1103.5 C1101,714.5 1099.5,716.3 1099.5,718.8 C1099.5,721.3 1101,723 1103.5,723 H1113 C1114.5,723 1115.5,721.5 1115.5,719.7 C1115.5,718 1114.5,716.8 1113,716.8 H1104"/>
  <path d="M1157,710V720M1153.3,716.5L1157,720L1160.7,716.5M1151.5,715.5L1147.8,719.5L1157,724.7L1166.2,719.5L1162.5,715.5M1147.8,723.2L1157,728.4L1166.2,723.2"/>
</g>
<path d="M1066,718H1072.5L1069.25,721.5Z" fill="#c4c4c4"/>
<circle cx="1208" cy="719.6" r="9.3" fill="none" stroke="#222" stroke-width="1.8" stroke-dasharray="4.2 2.6"/>
</svg>
<div class="t" style="left:995.6px;top:736.5px;font-size:10.4px;color:#bdbdbd">Slice</div>
<div class="t" style="left:1035.4px;top:736.5px;font-size:10.5px;color:#bdbdbd">Combine</div>
<div class="t" style="left:1094px;top:736.5px;font-size:10.5px;color:#bdbdbd">Attach</div>
<div class="t" style="left:1141px;top:736.5px;font-size:10.3px;color:#bdbdbd">Flatten</div>
<div class="t" style="left:1189.7px;top:736.5px;font-size:10.5px;color:#1e1e1e">Contour</div>
<div class="abs" style="left:980px;top:754px;width:300px;height:52px;background:#1b7f63"></div>
<svg class="abs" style="left:980px;top:754px" width="300" height="52" viewBox="980 754 300 52">
  <path d="M996,768 H1028 L1020.5,789 H996 Z" fill="#05a371"/>
  <path d="M996,789 L1001.5,794.5 V789 Z" fill="#0e6f52"/>
  <path d="M1006.2,777.6 A3.9,3.9 0 0 1 1013.4,779.2 V784.4" fill="none" stroke="#fff" stroke-width="1.5"/>
  <circle cx="1009.6" cy="781.2" r="3.1" fill="none" stroke="#fff" stroke-width="1.5"/>
  <path d="M1043.3,762.6 C1046.5,762.6 1048.6,764.8 1048.6,767.6 C1048.6,770 1046.5,771.3 1045.8,773.2 H1040.8 C1040.1,771.3 1038,770 1038,767.6 C1038,764.8 1040.1,762.6 1043.3,762.6 Z" fill="#ffcf66" stroke="#222" stroke-width="1"/>
  <path d="M1040.9,773.3 H1045.7 V776.2 C1045.7,777 1045,777.5 1044.2,777.5 H1042.4 C1041.6,777.5 1040.9,777 1040.9,776.2 Z" fill="#cfcfcf" stroke="#222" stroke-width="0.9"/>
</svg>
<div class="t" style="left:1054.6px;top:762.5px;font-size:14.8px;color:#fff">Unlock design tools with a free,</div>
<div class="t" style="left:1036.2px;top:782.5px;font-size:15.1px;color:#fff">30-day trial subscription.*</div>

</body></html>
